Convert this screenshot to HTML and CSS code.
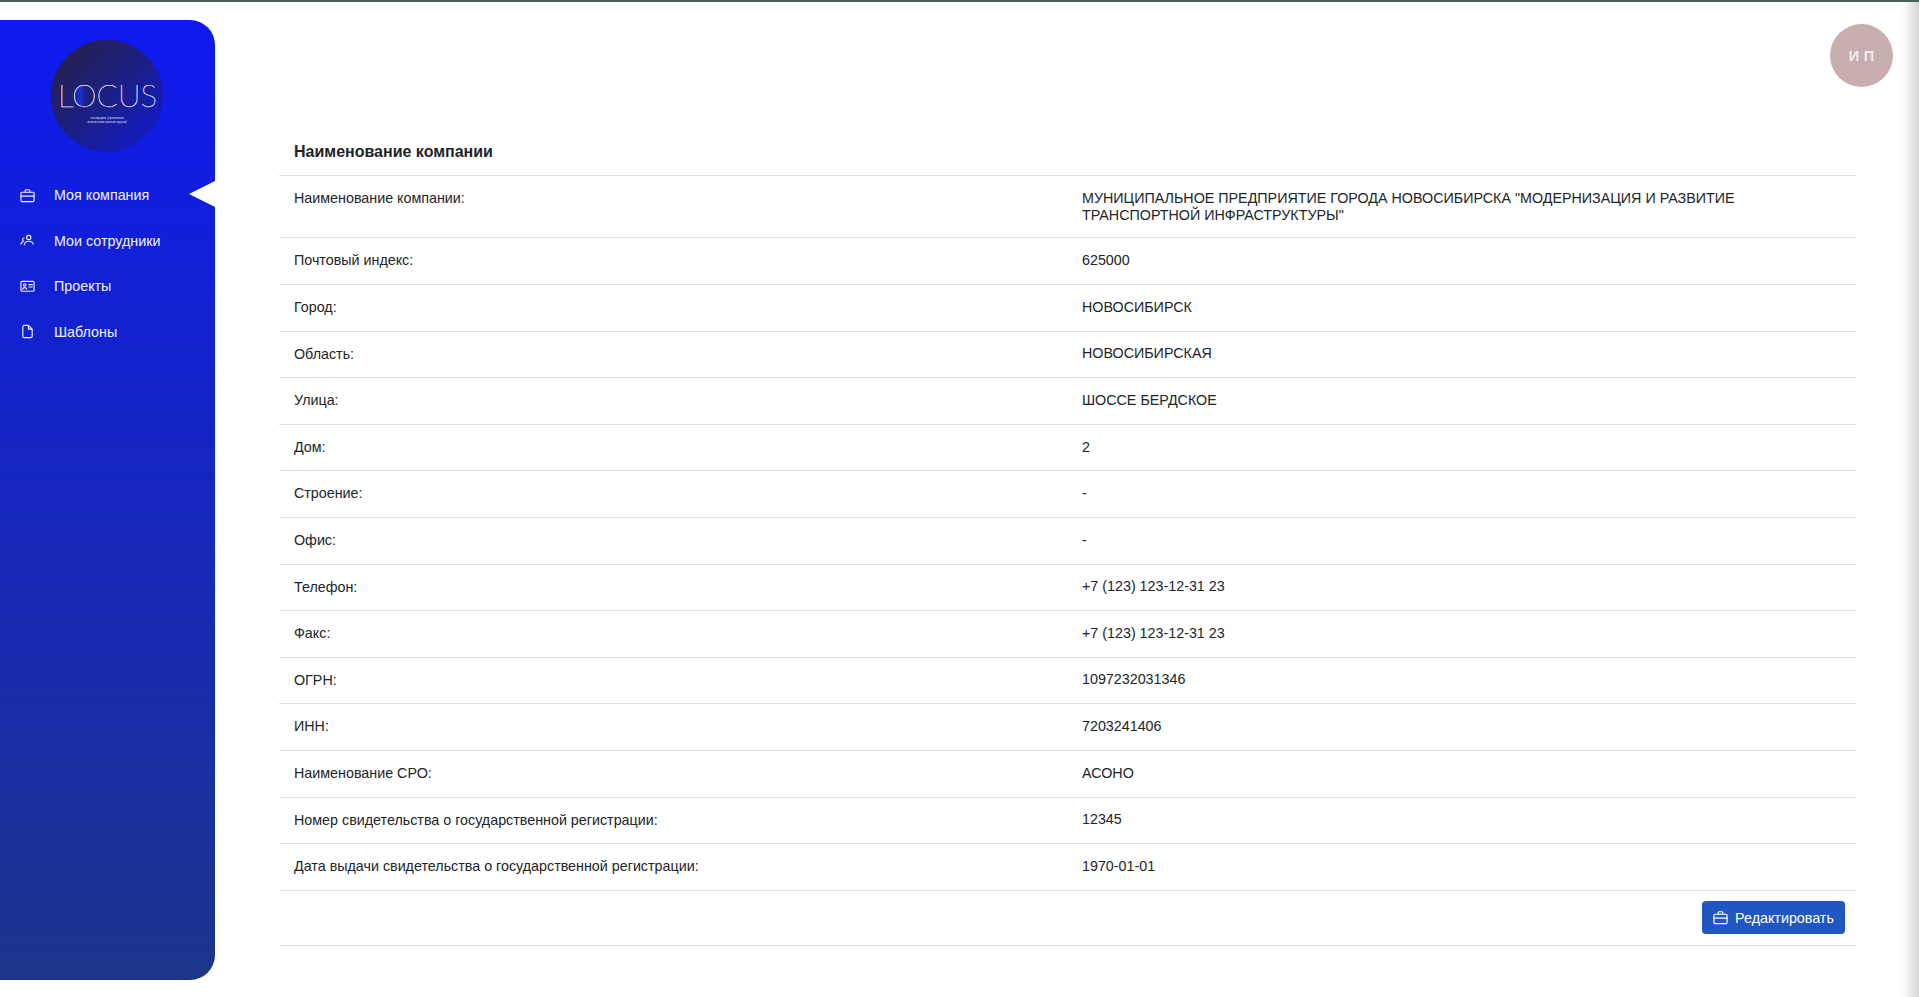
FILE: index.html
```html
<!DOCTYPE html>
<html lang="ru">
<head>
<meta charset="utf-8">
<title>Моя компания</title>
<link rel="stylesheet" href="styles.css">
</head>
<body>
<div class="page">
  <aside class="sidebar">
    <div class="logo">
      <svg class="logo-word" viewBox="0 0 112 40" width="112" height="40">
        <defs>
          <linearGradient id="oShade" x1="0" y1="0" x2="1" y2="0">
            <stop offset="0" stop-color="#1a2bd0" stop-opacity="0"/>
            <stop offset="0.3" stop-color="#1a33d8"/>
            <stop offset="0.6" stop-color="#1a2bd0" stop-opacity="0"/>
          </linearGradient>
        </defs>
        <ellipse cx="33.500" cy="20" rx="11.500" ry="11" fill="url(#oShade)"/>
        <text class="logo-text" x="7" y="31" textLength="99" lengthAdjust="spacingAndGlyphs">LOCUS</text>
      </svg>
      <div class="logo-sub-line">платформа управления</div>
      <div class="logo-sub-line">жизненным циклом зданий</div>
    </div>
    <nav class="nav">
      <a class="nav-item active">
        <svg class="icon" viewBox="0 0 16 16"><rect x="1" y="4.500" width="14" height="10" rx="1.200"/><path d="M5.500 4.500V2.800a1 1 0 0 1 1-1h3a1 1 0 0 1 1 1v1.700M1 8.700h14"/></svg>
        <span>Моя компания</span>
      </a>
      <a class="nav-item">
        <svg class="icon" viewBox="0 0 16 16"><circle cx="9.300" cy="4.800" r="2.300"/><path d="M4.500 12.800c.4-2.800 2.400-4 4.800-4s4.400 1.200 4.800 3.200M4.300 5.300a1.800 1.800 0 0 0-.3 3.500M1 12c.2-1.200.8-2 1.700-2.500"/></svg>
        <span>Мои сотрудники</span>
      </a>
      <a class="nav-item">
        <svg class="icon" viewBox="0 0 16 16"><rect x="1" y="2.500" width="14" height="10.500" rx="1"/><circle cx="5" cy="6.300" r="1.300"/><path d="M2.800 11c.2-1.300 1-1.800 2.200-1.800s2 .5 2.200 1.800M9.500 6h3.500M9.500 8.500h3.500"/></svg>
        <span>Проекты</span>
      </a>
      <a class="nav-item">
        <svg class="icon" viewBox="0 0 16 16"><path d="M3 3a1.500 1.500 0 0 1 1.500-1.500H9L13 5.500V13a1.500 1.500 0 0 1-1.500 1.500h-7A1.500 1.500 0 0 1 3 13zM9 1.500v4h4"/></svg>
        <span>Шаблоны</span>
      </a>
    </nav>
  </aside>
  <main class="main">
    <div class="avatar-row"><div class="avatar">И П</div></div>
    <section class="card">
      <h2 class="card-title">Наименование компании</h2>
      <div class="row"><div class="label">Наименование компании:</div><div class="value">МУНИЦИПАЛЬНОЕ ПРЕДПРИЯТИЕ ГОРОДА НОВОСИБИРСКА "МОДЕРНИЗАЦИЯ И РАЗВИТИЕ ТРАНСПОРТНОЙ ИНФРАСТРУКТУРЫ"</div></div>
      <div class="row"><div class="label">Почтовый индекс:</div><div class="value">625000</div></div>
      <div class="row"><div class="label">Город:</div><div class="value">НОВОСИБИРСК</div></div>
      <div class="row"><div class="label">Область:</div><div class="value">НОВОСИБИРСКАЯ</div></div>
      <div class="row"><div class="label">Улица:</div><div class="value">ШОССЕ БЕРДСКОЕ</div></div>
      <div class="row"><div class="label">Дом:</div><div class="value">2</div></div>
      <div class="row"><div class="label">Строение:</div><div class="value">-</div></div>
      <div class="row"><div class="label">Офис:</div><div class="value">-</div></div>
      <div class="row"><div class="label">Телефон:</div><div class="value">+7 (123) 123-12-31 23</div></div>
      <div class="row"><div class="label">Факс:</div><div class="value">+7 (123) 123-12-31 23</div></div>
      <div class="row"><div class="label">ОГРН:</div><div class="value">1097232031346</div></div>
      <div class="row"><div class="label">ИНН:</div><div class="value">7203241406</div></div>
      <div class="row"><div class="label">Наименование СРО:</div><div class="value">АСОНО</div></div>
      <div class="row"><div class="label">Номер свидетельства о государственной регистрации:</div><div class="value">12345</div></div>
      <div class="row"><div class="label">Дата выдачи свидетельства о государственной регистрации:</div><div class="value">1970-01-01</div></div>
      <div class="actions">
        <button class="btn">
          <svg class="icon" viewBox="0 0 16 16"><rect x="1" y="4.500" width="14" height="10" rx="1.200"/><path d="M5.500 4.500V2.800a1 1 0 0 1 1-1h3a1 1 0 0 1 1 1v1.700M1 8.700h14"/></svg>
          <span>Редактировать</span>
        </button>
      </div>
    </section>
  </main>
  <div class="edge-shadow"></div>
</div>
</body>
</html>
```
FILE: styles.css
```css
* { box-sizing: border-box; }
html, body { margin: 0; height: 100%; }
body { font-family: "Liberation Sans", Arial, sans-serif; font-size: 14.300px; color: #212529; background: #fff; overflow: hidden; }
.page { position: relative; height: 997px; border-top: 2px solid #46605a; display: flex; align-items: flex-start; padding-top: 18px; }
.sidebar { position: relative; flex: 0 0 215px; height: 960px; border-radius: 0 25px 25px 0; background: linear-gradient(180deg, #0f19f0 0%, #1b358b 100%); color: #fff; display: flex; flex-direction: column; }
.sidebar::after { content: ""; position: absolute; right: 0; top: 161px; border-style: solid; border-width: 13px 26px 13px 0; border-color: transparent #fff transparent transparent; }
.logo { align-self: flex-start; margin: 20px 0 0 51px; width: 112px; height: 112px; border-radius: 50%; background: linear-gradient(135deg, #25204d 10%, #1a1f8c 55%, #1119d8 100%); display: flex; flex-direction: column; align-items: center; padding-top: 36px; }
.logo-word { display: block; flex: none; margin-bottom: 1px; }
.logo-text { font-family: Lato, sans-serif; font-weight: 100; font-size: 31px; fill: #fff; stroke: #fff; stroke-width: 0.250; }
.logo-sub-line { font-family: Roboto, sans-serif; font-size: 3px; line-height: 3.700px; color: #cfd3ff; white-space: nowrap; }
.nav { margin-top: 20.500px; display: flex; flex-direction: column; }
.nav-item { height: 45.500px; display: flex; align-items: center; padding-left: 20px; gap: 19px; color: #f2f3ff; }
.icon { width: 15px; height: 15px; flex: none; fill: none; stroke: currentColor; stroke-width: 1.200; stroke-linejoin: round; stroke-linecap: round; }
.main { flex: 1; min-width: 0; padding-right: 63px; margin-left: 64px; }
.avatar-row { display: flex; justify-content: flex-end; margin-right: -37px; margin-top: 4px; height: 109px; }
.avatar { width: 63px; height: 63px; border-radius: 50%; background: #c8aeae; color: #f1ecec; font-weight: 700; font-size: 14.400px; letter-spacing: 0.300px; display: flex; align-items: center; justify-content: center; }
.card-title { margin: 0; height: 43px; padding: 9.500px 15px 0; font-size: 16px; font-weight: 700; line-height: 18px; border-bottom: 1px solid #dee2e6; }
.row { display: grid; grid-template-columns: 1fr 1fr; padding: 12px 15px; border-bottom: 1px solid #dee2e6; line-height: 21.600px; }
.label { padding-right: 15px; }
.value { padding-left: 14.500px; line-height: 17.280px; padding-top: 1.700px; padding-bottom: 1.200px; }
.actions { display: flex; justify-content: flex-end; padding: 10.500px 11px 11px; border-bottom: 1px solid #dee2e6; }
.btn { height: 33px; width: 143px; border: none; border-radius: 4px; background: #1f56c0; color: #fff; font: inherit; display: flex; align-items: center; justify-content: center; gap: 7px; padding: 0; }
.edge-shadow { position: absolute; right: 0; top: 0; bottom: 0; width: 17px; background: linear-gradient(90deg, rgba(215,215,215,0), #d6d6d6); }
```
